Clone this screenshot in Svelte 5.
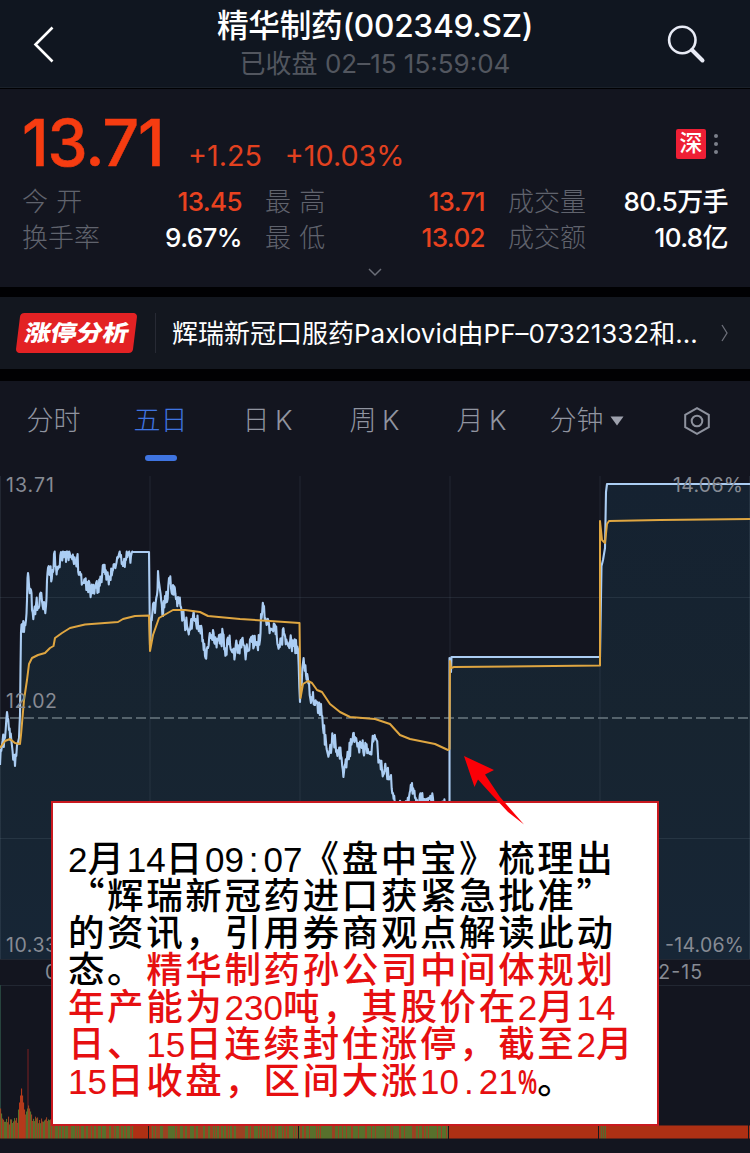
<script lang="ts">
	type Point = [number, number];

	const stats = [
		{ label: '今 开', value: '13.45', up: true },
		{ label: '最 高', value: '13.71', up: true },
		{ label: '成交量', value: '80.5万手', up: false },
		{ label: '换手率', value: '9.67%', up: false },
		{ label: '最 低', value: '13.02', up: true },
		{ label: '成交额', value: '10.8亿', up: false }
	];

	const tabs = ['分时', '五日', '日 K', '周 K', '月 K', '分钟'];
	const activeTab = '五日';

	// Callout text, one entry per line, split by colour
	const note = [
		[{ text: '2月14日09:07《盘中宝》梳理出', red: false }],
		[{ text: '“辉瑞新冠药进口获紧急批准”', red: false }],
		[{ text: '的资讯，引用券商观点解读此动', red: false }],
		[
			{ text: '态。', red: false },
			{ text: '精华制药孙公司中间体规划', red: true }
		],
		[{ text: '年产能为230吨，其股价在2月14', red: true }],
		[{ text: '日、15日连续封住涨停，截至2月', red: true }],
		[
			{ text: '15日收盘，区间大涨10.21%', red: true },
			{ text: '。', red: false }
		]
	];

	const isHalf = (ch: string) => ch.charCodeAt(0) < 128;
	const isQuote = (ch: string) => ch === '“' || ch === '”';

	const price: Point[] = [
		[0, 765], [2, 745], [5, 738], [7, 712], [9, 730], [12, 746], [15, 766], [17, 745], [19, 738],
		[20, 715], [21, 632], [22, 624], [24, 632], [26, 620], [27, 600], [28, 573], [29, 585], [31, 590],
		[32, 610], [34, 612], [36, 605], [38, 607], [40, 594], [42, 601], [44, 602], [46, 606], [47, 580],
		[48, 568], [50, 575], [53, 572], [54, 554], [56, 567], [59, 566], [61, 552], [65, 552], [66, 562],
		[68, 554], [71, 557], [74, 564], [77, 558], [80, 572], [83, 583], [87, 582], [90, 590], [93, 587],
		[98, 588], [101, 577], [104, 572], [107, 575], [110, 577], [113, 570], [116, 565], [119, 554],
		[121, 555], [123, 566], [126, 560], [128, 554], [131, 556], [133, 552], [149, 552], [150, 645],
		[151, 620], [153, 604], [155, 613], [157, 595], [158, 571], [160, 590], [163, 616], [165, 596],
		[167, 602], [169, 578], [171, 588], [173, 585], [176, 599], [178, 597], [181, 607], [184, 620],
		[187, 626], [190, 630], [193, 616], [195, 621], [200, 626], [203, 640], [205, 656], [208, 648],
		[211, 635], [213, 630], [216, 642], [219, 635], [221, 643], [223, 634], [226, 652], [229, 642],
		[232, 652], [235, 655], [237, 645], [239, 648], [242, 639], [245, 652], [248, 650], [252, 642],
		[256, 645], [260, 640], [261, 614], [264, 606], [266, 620], [269, 624], [272, 630], [275, 625],
		[278, 646], [281, 640], [284, 633], [287, 643], [290, 642], [294, 646], [298, 649], [300, 702],
		[301, 685], [303, 663], [306, 675], [309, 682], [311, 703], [313, 692], [315, 705], [318, 713],
		[321, 704], [323, 728], [326, 742], [329, 754], [333, 738], [338, 750], [341, 756], [344, 772],
		[347, 758], [352, 742], [355, 737], [358, 743], [362, 748], [366, 749], [369, 753], [372, 745],
		[376, 739], [379, 760], [382, 770], [386, 771], [391, 775], [393, 793], [396, 806], [404, 812],
		[409, 797], [412, 783], [415, 798], [418, 806], [421, 797], [425, 806], [431, 798], [436, 810],
		[445, 806], [449.5, 808], [449.5, 658], [451, 672], [451.5, 657], [600, 657], [601.5, 566],
		[603, 560], [605, 548], [606, 492], [607, 484], [750, 484]
	];

	const average: Point[] = [
		[0, 748], [5, 741], [10, 739], [15, 743], [20, 744], [21, 735], [24, 700], [27, 680], [29, 664],
		[32, 658], [38, 655], [45, 653], [50, 648], [53.5, 646], [55, 638], [62, 633], [70, 628],
		[85, 624.5], [118, 622], [123, 619], [135, 616], [149, 615.5], [150, 651], [153, 635], [159, 618],
		[166, 614], [173, 610], [185, 610], [200, 612], [208, 616], [240, 619], [270, 621], [299.5, 623],
		[300.5, 698], [303, 684], [308, 681], [312, 683], [317, 690], [322, 692], [330, 704], [340, 712],
		[350, 717], [375, 719], [390, 724], [400, 735], [410, 739], [435, 744], [448, 750], [449.5, 749],
		[450, 661], [451, 668], [454, 667], [600, 665.5], [600, 521], [602, 540], [605, 543], [607, 524],
		[609, 521], [660, 520], [750, 519]
	];

	// Small seeded generator, keeps the curve the same on each render
	let seed = 11;
	function random() {
		seed = (seed * 16807) % 2147483647;
		return seed / 2147483647;
	}

	// Add tick noise between the key points of the trading curve
	function withTicks(points: Point[]): Point[] {
		const out: Point[] = [];
		points.forEach(([x, y], i) => {
			out.push([x, y]);
			const next = points[i + 1];
			if (!next || x > 448 || (x >= 133 && x < 150)) return;
			const steps = Math.round((next[0] - x) * 1.5);
			for (let s = 1; s < steps; s++) {
				const t = s / steps;
				const ty = y + (next[1] - y) * t + (random() - 0.5) * 17;
				out.push([x + (next[0] - x) * t, Math.max(551.5, ty)]);
			}
		});
		return out;
	}

	const toPath = (points: Point[]) =>
		'M' + points.map(([x, y]) => `${x.toFixed(1)} ${y.toFixed(1)}`).join('L');

	const pricePath = toPath(withTicks(price));
	const averagePath = toPath(average);
	const areaPath = pricePath + 'L750 959L0 959Z';

	const volume = Array.from({ length: 750 }, (_, x) => {
		let height = x < 60 ? 14 + random() * 8 : 13;
		if (x < 3) height = 30 - x * 5;
		if (x > 17 && x < 25) height = 50 - Math.abs(21 - x) * 7;
		if (x >= 25 && x < 32) height = 33 - Math.abs(28 - x) * 3;
		const mixed = x < 133 || (x > 150 && x < 449);
		const greenShare = x < 20 ? 0.6 : x > 300 ? 0.65 : 0.5;
		let color = mixed && random() < greenShare ? '#58702c' : mixed ? '#9a4222' : '#ae3014';
		if (x > 18 && x < 25) color = '#b5391b';
		if (x >= 600 && x < 606) color = x % 2 ? '#5c682b' : '#8a4420';
		if ([148, 298, 448, 598, 748].includes(x)) color = '#17191e';
		return { x, height, color };
	});
</script>

<div class="page" lang="zh-CN">
	<header class="header">
		<svg class="back" viewBox="0 0 24 40"><path d="M21.5 3.5 4.5 20.5 21.5 37.5" /></svg>
		<div class="heading">
			<h1>精华制药(002349.SZ)</h1>
			<p>已收盘 02–15 15:59:04</p>
		</div>
		<svg class="search" viewBox="0 0 40 40">
			<circle cx="16.3" cy="16" r="13.2" />
			<path d="M26 26 36.5 36.5" />
		</svg>
	</header>

	<section class="quote">
		<div class="quote-top">
			<span class="last">13.71</span>
			<span class="change">+1.25</span>
			<span class="change">+10.03%</span>
			<div class="market">
				<span class="badge">深</span>
				<span class="dots"><i></i><i></i><i></i></span>
			</div>
		</div>
		<div class="stats">
			{#each stats as stat}
				<div class="stat">
					<span class="label">{stat.label}</span>
					<span class="value" class:up={stat.up}>{stat.value}</span>
				</div>
			{/each}
		</div>
		<svg class="expand" viewBox="0 0 16 10"><path d="M2 2 8 8 14 2" /></svg>
	</section>

	<section class="analysis">
		<span class="tag"><b>涨停分析</b></span>
		<span class="divider"></span>
		<span class="news">辉瑞新冠口服药Paxlovid由PF–07321332和...</span>
		<svg class="more" viewBox="0 0 8 18"><path d="M1 1 6 9 1 17" /></svg>
	</section>

	<section class="board">
		<nav class="tabs">
			{#each tabs as tab}
				<span class="tab" class:active={tab === activeTab}>
					{tab}
					{#if tab === '分钟'}
						<svg class="caret" viewBox="0 0 14 10"><path d="M0.5 0.5h13L7 9.5z" /></svg>
					{/if}
				</span>
			{/each}
			<span class="tab">
				<svg class="settings" viewBox="0 0 28 30">
					<path d="M14 2.2 25.8 8.8V21.2L14 27.8 2.2 21.2V8.8Z" />
					<circle cx="14" cy="15" r="5.3" />
				</svg>
			</span>
		</nav>

		<div class="chart">
			<svg class="plot" viewBox="0 470 750 683">
				<defs>
					<linearGradient id="fill" x1="0" y1="0" x2="0" y2="1">
						<stop offset="0" stop-color="#152231" />
						<stop offset="0.5" stop-color="#172430" />
						<stop offset="1" stop-color="#172636" />
					</linearGradient>
				</defs>
				<path d={areaPath} fill="url(#fill)" />
				<g class="grid">
					<path d="M0 597.5H750M0 838.5H750M0 959.5H750M0 985.5H750" />
					<path d="M0.5 476V959M150 476V959M300 476V959M450 476V959M600 476V959M749.5 476V959" />
				</g>
				<path class="base" d="M-4 718H750" />
				<path class="price" d={pricePath} />
				<path class="average" d={averagePath} />

				<g class="axis">
					<text x="6" y="492" textLength="48">13.71</text>
					<text x="6" y="708" textLength="51">12.02</text>
					<text x="6" y="952" textLength="51">10.33</text>
					<text x="673" y="492" textLength="70">14.06%</text>
					<text x="665" y="952" textLength="79">-14.06%</text>
					<text x="45" y="979" textLength="57">02-09</text>
					<text x="645" y="979" textLength="57">02-15</text>
				</g>

				<path d="M0.5 985V1110" stroke="#27443e" />
				<path d="M28 1049V1110" stroke="#5a1c22" stroke-width="1.5" />
				{#each volume as bar}
					<rect x={bar.x} y={1138.5 - bar.height} width="1.1" height={bar.height} fill={bar.color} />
				{/each}
			</svg>

			<div class="note">
				{#each note as line}
					<p>
						{#each line as part}<span class:red={part.red}
								>{#each part.text as ch}{#if isHalf(ch)}<span class="half" class:percent={ch === '%'}>{ch}</span
										>{:else if isQuote(ch)}<span class="mark">{ch}</span>{:else}{ch}{/if}{/each}</span
							>{/each}
					</p>
				{/each}
			</div>

			<svg class="arrow" viewBox="0 0 60 70">
				<path d="M0 0 30 14 21 18.5 36 41 60 68.5 44 56 28 39 14 23.5 10.5 31Z" />
			</svg>
		</div>
	</section>
</div>

<style>
	:global(body) {
		margin: 0;
		background: #000;
	}

	.page {
		width: 750px;
		height: 1153px;
		overflow: hidden;
		display: flex;
		flex-direction: column;
		background: #010103;
		color: #fff;
		font-family: Inter, 'Noto Sans CJK SC', sans-serif;
	}

	svg {
		display: block;
		fill: none;
	}

	h1,
	p {
		margin: 0;
	}

	.header {
		height: 88px;
		box-sizing: border-box;
		padding: 1px 44px 0 31px;
		display: grid;
		grid-template-columns: 40px 1fr 40px;
		align-items: center;
		background: #101620;
		border-bottom: 1px solid #1a212a;
		margin-bottom: 1px;
	}

	.back {
		width: 24px;
		height: 40px;
		stroke: #fff;
		stroke-width: 2.6;
	}

	.search {
		width: 40px;
		height: 40px;
		stroke: #e8ebf5;
		stroke-width: 2.6;
	}

	.search path {
		stroke-width: 4;
		stroke-linecap: round;
	}

	.heading {
		padding-left: 13px;
		text-align: center;
		white-space: nowrap;
	}

	.heading h1 {
		font-size: 31.7px;
		line-height: 40px;
		font-weight: 500;
		letter-spacing: -0.3px;
	}

	.heading p {
		font-size: 26px;
		line-height: 36px;
		color: #52565f;
	}

	.quote {
		height: 198px;
		box-sizing: border-box;
		padding: 14px 22px 0;
		background: #13151f;
	}

	.quote-top {
		display: flex;
		align-items: baseline;
		height: 81px;
		color: #e2411f;
	}

	.last {
		font-size: 64px;
		line-height: 80px;
		font-weight: 500;
		letter-spacing: -1px;
		color: #f63c11;
		-webkit-text-stroke: 0.6px #f63c11;
		width: 166px;
	}

	.change {
		font-size: 28.7px;
		margin-right: 23px;
	}

	.market {
		display: flex;
		align-items: center;
		align-self: center;
		gap: 8px;
		margin-left: auto;
		margin-right: 10px;
	}

	.badge {
		width: 30px;
		height: 30px;
		line-height: 29px;
		font-size: 23px;
		font-weight: 500;
		text-align: center;
		border-radius: 2px;
		background: #ee1f35;
		color: #fff;
	}

	.dots {
		display: flex;
		flex-direction: column;
		gap: 4px;
	}

	.dots i {
		width: 4px;
		height: 4px;
		border-radius: 50%;
		background: #7c808b;
	}

	.stats {
		display: grid;
		grid-template-columns: 220px 220px 220px;
		column-gap: 23px;
		row-gap: 0;
	}

	.stat {
		display: flex;
		justify-content: space-between;
		height: 36px;
		line-height: 36px;
		font-size: 26px;
		white-space: nowrap;
	}

	.label {
		color: #60636d;
		font-weight: 300;
		word-spacing: 1px;
	}

	.value {
		font-weight: 500;
		letter-spacing: -0.6px;
	}

	.up {
		color: #e9421f;
	}

	.expand {
		width: 16px;
		height: 10px;
		margin: 11px auto 0;
		stroke: #6b6e78;
		stroke-width: 1.5;
	}

	.analysis {
		height: 72px;
		margin: 10px 0 12px;
		padding: 0 21px 0 18px;
		box-sizing: border-box;
		display: flex;
		align-items: center;
		background: #13171f;
	}

	.tag {
		width: 117px;
		height: 40px;
		flex: none;
		transform: skewX(-7deg);
		border-radius: 4px;
		background: #e32224;
		text-align: center;
		line-height: 40px;
	}

	.tag b {
		display: inline-block;
		font-size: 26px;
		font-weight: 900;
		transform: translateX(1px) skewX(-4deg) scaleY(0.86);
	}

	.divider {
		width: 1px;
		height: 40px;
		margin: 0 16px 0 20px;
		background: #272a34;
	}

	.news {
		font-size: 26px;
		line-height: 36px;
		padding-top: 2px;
		white-space: nowrap;
	}

	.more {
		width: 8px;
		height: 18px;
		margin-left: auto;
		stroke: #6c6f79;
		stroke-width: 1.3;
	}

	.board {
		flex: 1;
		background: #13151f;
	}

	.tabs {
		height: 89px;
		display: grid;
		grid-template-columns: repeat(7, 107px);
	}

	.tab {
		position: relative;
		display: flex;
		align-items: center;
		justify-content: center;
		height: 80px;
		font-size: 27px;
		line-height: 42px;
		word-spacing: -2px;
		color: #9094a0;
		font-weight: 300;
		white-space: nowrap;
	}

	.tab.active {
		color: #3f74e0;
	}

	.tab.active::after {
		content: '';
		position: absolute;
		left: 38px;
		top: 74px;
		width: 32px;
		height: 6px;
		border-radius: 3px;
		background: #3f74e0;
	}

	.caret {
		width: 14px;
		height: 10px;
		margin: 0 4px 0 6px;
		fill: #9ea1ad;
	}

	.settings {
		width: 28px;
		height: 30px;
		margin-left: 2px;
		stroke: #8e929e;
		stroke-width: 2;
	}

	.chart {
		position: relative;
	}

	.plot {
		width: 750px;
		height: 683px;
	}

	.grid {
		stroke: #8aa0b5;
		stroke-opacity: 0.13;
	}

	.base {
		stroke: #6b7880;
		stroke-width: 1.7;
		stroke-dasharray: 10 4;
	}

	.price {
		stroke: #abcdf3;
		stroke-width: 2.1;
		stroke-linejoin: round;
	}

	.average {
		stroke: #dfa641;
		stroke-width: 2;
		stroke-linejoin: round;
	}

	.axis text {
		font-size: 19.5px;
		fill: #878b94;
	}

	/* Annotation box over the chart */
	.note {
		position: absolute;
		left: 51px;
		top: 331px;
		width: 608px;
		height: 325px;
		box-sizing: border-box;
		padding: 38px 0 0 15px;
		border: 2px solid #c9191f;
		background: #fff;
		color: #000;
		font-family: 'Liberation Sans', 'Noto Sans CJK SC', sans-serif;
		font-size: 36.5px;
		font-weight: 500;
		letter-spacing: 2.6px;
	}

	.note p {
		height: 37px;
		line-height: 37px;
		white-space: nowrap;
	}

	.red {
		color: #e60f10;
	}

	.half {
		display: inline-block;
		width: 19.55px;
		line-height: 30px;
		font-size: 35px;
		letter-spacing: 0;
		text-align: center;
	}

	.mark {
		font-family: 'Noto Sans CJK SC', sans-serif;
		line-height: 0;
	}

	.percent {
		transform: scaleX(0.6);
		text-indent: -6px;
		font-weight: 700;
	}

	.arrow {
		position: absolute;
		left: 464px;
		top: 286px;
		width: 60px;
		height: 70px;
		fill: #fb0007;
	}
</style>
